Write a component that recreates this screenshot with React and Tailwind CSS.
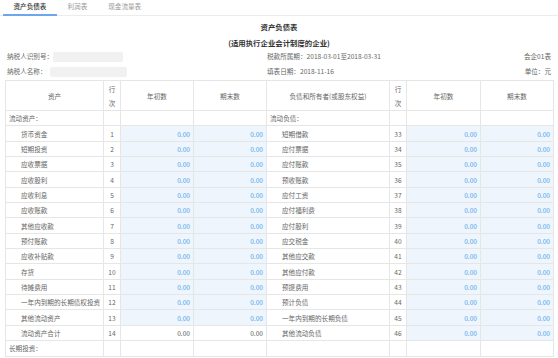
import React from "react";

const left = [
  { label: "流动资产：", cat: true },
  { label: "货币资金", n: 1 },
  { label: "短期投资", n: 2 },
  { label: "应收票据", n: 3 },
  { label: "应收股利", n: 4 },
  { label: "应收利息", n: 5 },
  { label: "应收账款", n: 6 },
  { label: "其他应收款", n: 7 },
  { label: "预付账款", n: 8 },
  { label: "应收补贴款", n: 9 },
  { label: "存货", n: 10 },
  { label: "待摊费用", n: 11 },
  { label: "一年内到期的长期债权投资", n: 12 },
  { label: "其他流动资产", n: 13 },
  { label: "流动资产合计", n: 14, total: true },
  { label: "长期投资：", cat: true },
];

const right = [
  { label: "流动负债：", cat: true },
  { label: "短期借款", n: 33 },
  { label: "应付票据", n: 34 },
  { label: "应付账款", n: 35 },
  { label: "预收账款", n: 36 },
  { label: "应付工资", n: 37 },
  { label: "应付福利费", n: 38 },
  { label: "应付股利", n: 39 },
  { label: "应交税金", n: 40 },
  { label: "其他应交款", n: 41 },
  { label: "其他应付款", n: 42 },
  { label: "预提费用", n: 43 },
  { label: "预计负债", n: 44 },
  { label: "一年内到期的长期负债", n: 45 },
  { label: "其他流动负债", n: 46 },
  { empty: true },
];

const td = "border border-[#e6e6e6] p-0 h-[15.35px] leading-[14px] whitespace-nowrap overflow-hidden";

function Cells({ r }) {
  if (r.empty || r.cat) {
    return (
      <>
        <td className={`${td} pl-[3px] text-[#666]`}>{r.cat ? r.label : ""}</td>
        <td className={td}></td>
        <td className={td}></td>
        <td className={td}></td>
      </>
    );
  }
  const val = r.total
    ? `${td} text-right pr-[3px] text-[#555]`
    : `${td} text-right pr-[3px] text-[#4a9fe8] bg-[#eef5fd]`;
  return (
    <>
      <td className={`${td} pl-[15px] text-[#666]`}>{r.label}</td>
      <td className={`${td} text-center text-[#666]`}>{r.n}</td>
      <td className={val}>0.00</td>
      <td className={val}>0.00</td>
    </>
  );
}

export default function App() {
  const th = "border border-[#e6e6e6] p-0 font-normal text-[#666] text-center leading-[14px]";
  return (
    <div
      className="w-[558px] h-[358px] overflow-hidden bg-white text-[6.6px]"
      style={{ fontFamily: '"Noto Sans CJK SC", "Noto Sans", sans-serif' }}
    >
      <div className="h-[16px] border-b border-[#ececec] flex pl-[3px]">
        <div className="px-[10.5px] h-[16px] leading-[13px] border-b-2 border-[#6ea6ee] text-[#333] font-medium">
          资产负债表
        </div>
        <div className="px-[10.5px] h-[16px] leading-[13px] text-[#999]">利润表</div>
        <div className="px-[10.5px] h-[16px] leading-[13px] text-[#999]">现金流量表</div>
      </div>

      <div className="pt-[4px] h-[18px] leading-[14px] text-center font-bold text-[7.4px] text-[#333]">
        资产负债表
      </div>
      <div className="mt-[2px] h-[14px] leading-[14px] text-center font-bold text-[7.4px] text-[#333]">
        (适用执行企业会计制度的企业)
      </div>

      <div className="flex h-[14px] items-center pl-[7px] pr-[7px] text-[#666]">
        <div className="w-[260px] flex items-center">
          <span>纳税人识别号：</span>
          <span className="ml-[0px] w-[70px] h-[10px] bg-[#f1f1f1] rounded-[2px]"></span>
        </div>
        <div className="flex-1">税款所属期：2018-03-01至2018-03-31</div>
        <div>会企01表</div>
      </div>
      <div className="mt-[1px] flex h-[14px] items-center pl-[7px] pr-[7px] text-[#666]">
        <div className="w-[260px] flex items-center">
          <span>纳税人名称：</span>
          <span className="ml-[3px] w-[77px] h-[10px] bg-[#f1f1f1] rounded-[2px]"></span>
        </div>
        <div className="flex-1">填表日期：2018-11-16</div>
        <div>单位：元</div>
      </div>

      <table className="mt-[1px] ml-[5px] w-[548px] table-fixed border-collapse">
        <colgroup>
          <col className="w-[98px]" />
          <col className="w-[17px]" />
          <col className="w-[73px]" />
          <col className="w-[73px]" />
          <col className="w-[123px]" />
          <col className="w-[17px]" />
          <col className="w-[74px]" />
          <col className="w-[73px]" />
        </colgroup>
        <thead>
          <tr className="h-[30px]">
            <th className={th}>资产</th>
            <th className={th}>行<br />次</th>
            <th className={th}>年初数</th>
            <th className={th}>期末数</th>
            <th className={th}>负债和所有者(或股东权益)</th>
            <th className={th}>行<br />次</th>
            <th className={th}>年初数</th>
            <th className={th}>期末数</th>
          </tr>
        </thead>
        <tbody>
          {left.map((l, i) => (
            <tr key={i}>
              <Cells r={l} />
              <Cells r={right[i]} />
            </tr>
          ))}
        </tbody>
      </table>
    </div>
  );
}
